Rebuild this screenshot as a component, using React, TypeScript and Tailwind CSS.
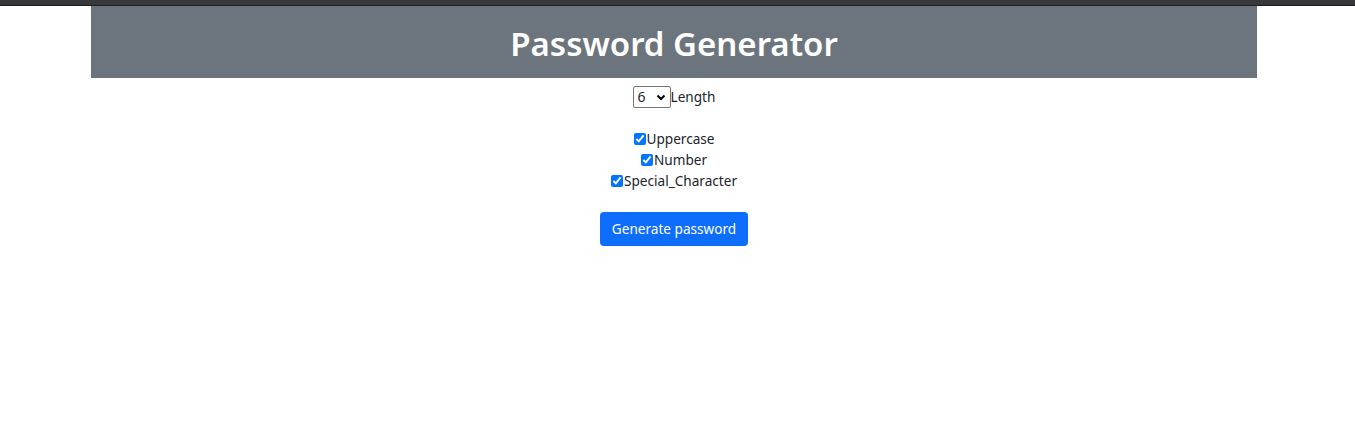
import React from "react";

function Check({ label }: { label: string }) {
  return (
    <label className="flex items-center justify-center h-[21px]">
      <input
        type="checkbox"
        defaultChecked
        className="w-[12px] h-[12px] m-0 mr-[1px] accent-[#0075ff]"
      />
      <span>{label}</span>
    </label>
  );
}

export default function App() {
  return (
    <div
      className="w-[1355px] h-[435px] bg-white text-[#212529] text-[13.6px] leading-[21.6px]"
      style={{ fontFamily: '"Noto Sans", "Open Sans", sans-serif' }}
    >
      <div className="h-[6px] bg-[#37383b] border-b border-[#1f1f22]" />
      <div className="w-[1348px]">
        <div className="mx-[91px] w-[1166px] h-[72px] bg-[#6c757d] flex items-center justify-center">
          <h1 className="text-white text-[33px] font-semibold leading-none pt-[2px]">
            Password Generator
          </h1>
        </div>
        <div className="flex flex-col items-center pt-[8px]">
          <div className="flex items-center h-[22px]">
            <div className="w-[38px] h-[22px] border border-[#767676] rounded-[2px] flex items-center justify-between pl-[4px] pr-[3px]">
              <span className="text-[14px] leading-none">6</span>
              <svg width="12" height="12" viewBox="0 0 12 12">
                <path d="M2.5 4.5 L6 8 L9.5 4.5" stroke="#000" strokeWidth="2" fill="none" />
              </svg>
            </div>
            <span>Length</span>
          </div>
          <div className="h-[20px]" />
          <Check label="Uppercase" />
          <Check label="Number" />
          <Check label="Special_Character" />
          <div className="h-[21px]" />
          <button className="bg-[#0d6efd] text-white rounded-[4px] h-[34px] px-[12px] text-[13.6px]">
            Generate password
          </button>
        </div>
      </div>
    </div>
  );
}
